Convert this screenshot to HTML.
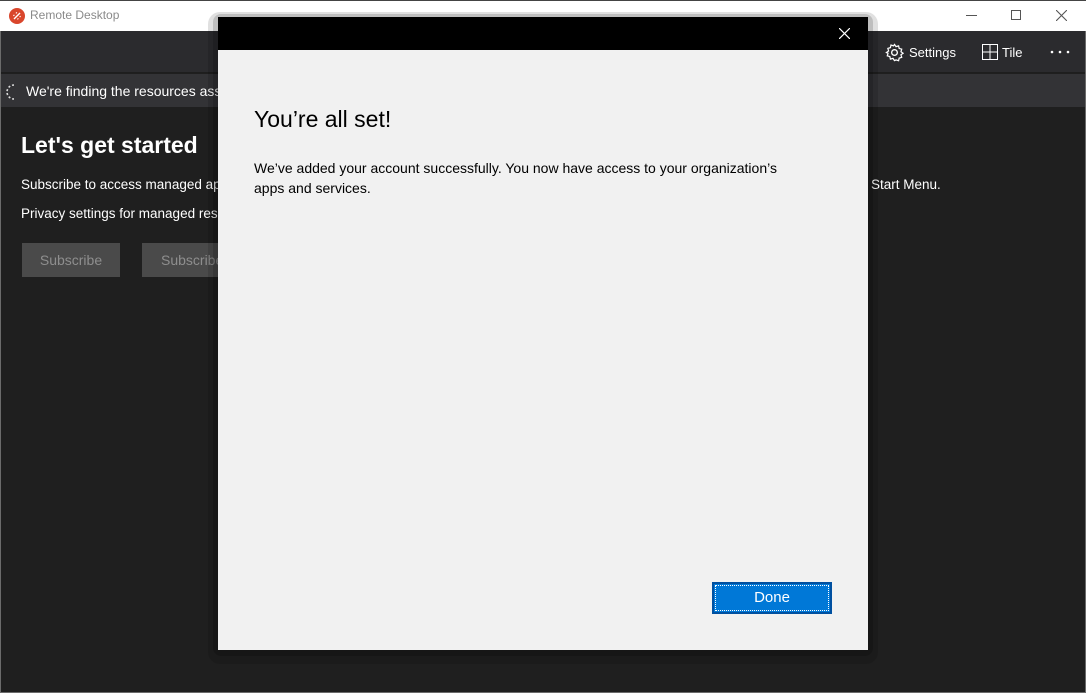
<!DOCTYPE html>
<html><head><meta charset="utf-8"><style>
*{margin:0;padding:0;box-sizing:border-box}
body{width:1086px;height:693px;overflow:hidden;background:#1f1f1f;font-family:"Segoe UI","Liberation Sans",sans-serif;position:relative}
.abs{position:absolute}
</style></head><body>
<div class="abs" style="left:0;top:0;width:1086px;height:693px;border:1px solid #6b6b6b;border-top:none"></div>
<!-- title bar -->
<div class="abs" style="left:0;top:0;width:1086px;height:31px;background:#fff;border-top:1px solid #444"></div>
<svg class="abs" style="left:9px;top:8px" width="16" height="16" viewBox="0 0 16 16"><circle cx="8" cy="8" r="8" fill="#d9462c"/><path d="M5 11l6-6M7 4.5l.8.8M4.5 7l.8.8M8.5 10.5l.8.8M10.7 8.2l.8.8" stroke="#fff" stroke-width="1.4"/></svg>
<div class="abs" style="left:30px;top:8px;font-size:12px;color:#8a8a8a">Remote Desktop</div>
<div class="abs" style="left:966px;top:15px;width:11px;height:1px;background:#555"></div>
<div class="abs" style="left:1011px;top:10px;width:10px;height:10px;border:1px solid #555"></div>
<svg class="abs" style="left:1056px;top:10px" width="11" height="11"><path d="M0 0L11 11M11 0L0 11" stroke="#555" stroke-width="1.1"/></svg>
<!-- toolbar -->
<div class="abs" style="left:1px;top:31px;width:1084px;height:42px;background:#2b2b2e;border-bottom:1px solid #1e1e1e"></div>
<svg class="abs" style="left:885px;top:43px" width="19" height="19" viewBox="0 0 20 20"><circle cx="10" cy="10" r="3" fill="none" stroke="#fff" stroke-width="1.4"/><path d="M10 1.5l1.6 2.3 2.7-.8.6 2.7 2.7.8-.8 2.7 2.3 1.6-2.3 1.6.8 2.7-2.7.8-.6 2.7-2.7-.8L10 18.5l-1.6-2.3-2.7.8-.6-2.7-2.7-.8.8-2.7L1.5 10l2.3-1.6-.8-2.7 2.7-.8.6-2.7 2.7.8z" fill="none" stroke="#fff" stroke-width="1.3"/></svg>
<div class="abs" style="left:909px;top:45px;font-size:13px;color:#fff">Settings</div>
<svg class="abs" style="left:982px;top:44px" width="16" height="16"><rect x=".5" y=".5" width="15" height="15" fill="none" stroke="#fff"/><path d="M8 0v16M0 8h16" stroke="#fff"/></svg>
<div class="abs" style="left:1002px;top:45px;font-size:13px;color:#fff">Tile</div>
<svg class="abs" style="left:1050px;top:50px" width="20" height="4"><circle cx="2" cy="2" r="1.3" fill="#fff"/><circle cx="10" cy="2" r="1.3" fill="#fff"/><circle cx="18" cy="2" r="1.3" fill="#fff"/></svg>
<!-- info bar -->
<div class="abs" style="left:1px;top:74px;width:1084px;height:33px;background:#333336"></div>
<svg class="abs" style="left:6px;top:84px" width="10" height="16"><path d="M8 1A7 7 0 0 0 8 15" fill="none" stroke="#ddd" stroke-width="1.6" stroke-dasharray="2 2"/></svg>
<div class="abs" style="left:26px;top:83px;font-size:14px;color:#fff">We're finding the resources associated with your account</div>
<!-- body -->
<div class="abs" style="left:21px;top:132px;font-size:23px;font-weight:bold;color:#fff">Let's get started</div>
<div class="abs" style="left:21px;top:177px;font-size:13.5px;color:#fff;white-space:nowrap">Subscribe to access managed apps and desktops</div>
<div class="abs" style="left:871px;top:177px;font-size:13.5px;color:#fff">Start Menu.</div>
<div class="abs" style="left:21px;top:206px;font-size:13.5px;color:#fff;white-space:nowrap">Privacy settings for managed resources</div>
<div class="abs" style="left:22px;top:243px;width:98px;height:34px;background:#4a4a4a;color:#8e8e8e;font-size:14px;text-align:center;line-height:34px">Subscribe</div>
<div class="abs" style="left:142px;top:243px;width:98px;height:34px;background:#4a4a4a;color:#8e8e8e;font-size:14px;line-height:34px;padding-left:19px">Subscribe</div>
<!-- dialog -->
<div class="abs" style="left:208px;top:12px;width:670px;height:652px;background:rgba(0,0,0,.12);border-radius:12px"></div>
<div class="abs" style="left:213px;top:14px;width:660px;height:642px;background:rgba(0,0,0,.15);border-radius:8px"></div>
<div class="abs" style="left:218px;top:17px;width:650px;height:633px;background:#f1f1f1"></div>
<div class="abs" style="left:218px;top:17px;width:650px;height:33px;background:#000"></div>
<svg class="abs" style="left:839px;top:28px" width="11" height="11"><path d="M0 0L11 11M11 0L0 11" stroke="#fff" stroke-width="1.2"/></svg>
<div class="abs" style="left:254px;top:106px;font-size:23px;color:#000">You’re all set!</div>
<div class="abs" style="left:254px;top:158px;width:555px;font-size:14px;line-height:20px;color:#000">We’ve added your account successfully. You now have access to your organization’s apps and services.</div>
<div class="abs" style="left:712px;top:582px;width:120px;height:32px;background:#0078d7;border:2px solid #0050a0"><div style="position:absolute;inset:1px;border:1px dotted #fff"></div><div style="text-align:center;line-height:28px;font-size:15px;color:#fff">Done</div></div>
</body></html>
